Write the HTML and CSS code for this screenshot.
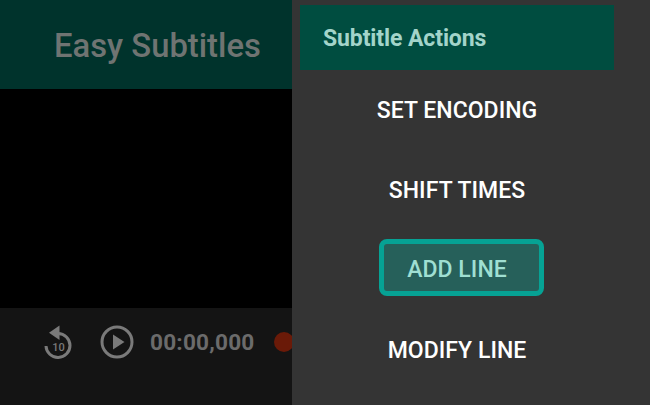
FILE: index.html
```html
<!DOCTYPE html>
<html lang="en">
<head>
<meta charset="utf-8">
<title>Easy Subtitles</title>
<link rel="stylesheet" href="styles.css">
</head>
<body>
<div class="app">
  <main class="main">
    <header class="appbar"><h1 class="app-title">Easy Subtitles</h1></header>
    <div class="video"></div>
    <div class="controls">
      <svg class="icon-replay" width="30" height="34" viewBox="0 0 30 34" aria-hidden="true">
        <path class="stroke" d="M15 8.5a12 12 0 1 1-12 12.5"/>
        <path class="fill" d="M16.5 0.5V15L6 7.8z"/>
        <text class="replay-num" x="15.5" y="25.5" text-anchor="middle">10</text>
      </svg>
      <svg class="icon-play" width="34" height="34" viewBox="0 0 34 34" aria-hidden="true">
        <circle class="stroke" cx="17" cy="17" r="15"/>
        <path class="fill" d="M13 9.5 24.5 17 13 24.5z"/>
      </svg>
      <span class="time">00:00,000</span>
      <span class="record"></span>
    </div>
  </main>
  <aside class="drawer">
    <div class="drawer-head">Subtitle Actions</div>
    <ul class="actions">
      <li class="action"><span class="action-label">SET ENCODING</span></li>
      <li class="action"><span class="action-label">SHIFT TIMES</span></li>
      <li class="action"><span class="action-label is-focused">ADD LINE</span></li>
      <li class="action"><span class="action-label">MODIFY LINE</span></li>
    </ul>
  </aside>
</div>
</body>
</html>
```
FILE: styles.css
```css
* { box-sizing: border-box; }
html, body { margin: 0; height: 100%; }
body { background: #343434; font-family: Roboto, "Liberation Sans", sans-serif; overflow: hidden; }
.app { display: flex; width: 650px; height: 405px; }
.main { width: 292px; flex: none; display: flex; flex-direction: column; overflow: hidden; background: #141414; }
.appbar { height: 89px; flex: none; background: #00332c; display: flex; align-items: center; padding: 2px 0 0 54px; }
.app-title { margin: 0; font-size: 32.8px; font-weight: 500; color: #6f7472; white-space: nowrap; }
.video { height: 219px; flex: none; background: #000; }
.controls { flex: none; height: 97px; display: flex; align-items: center; padding: 0 0 30px 43px; white-space: nowrap; }
.stroke { fill: none; stroke: #7a7a7a; stroke-width: 3; }
.fill { fill: #7a7a7a; }
.replay-num { fill: #7a7a7a; font-size: 11px; font-weight: 500; font-family: Roboto, sans-serif; }
.icon-replay { flex: none; margin-right: 27px; }
.icon-play { flex: none; margin-right: 16px; }
.time { font-size: 22.6px; font-weight: 700; color: #6b6b6b; letter-spacing: 0.2px; padding-top: 1px; }
.record { flex: none; width: 20px; height: 20px; border-radius: 50%; background: #6a1a08; margin-left: 20px; }
.drawer { width: 358px; flex: none; padding: 5px 0 0 8px; background: #343434; }
.drawer-head { width: 314px; height: 65px; background: #004d40; color: #a3d4ca; font-size: 23px; font-weight: 700; letter-spacing: -0.1px; display: flex; align-items: center; padding: 2px 0 0 23px; }
.actions { list-style: none; margin: 0; padding: 0; width: 314px; }
.action { height: 80px; display: flex; align-items: center; justify-content: center; }
.action-label { color: #fff; font-size: 23px; font-weight: 500; letter-spacing: 0.05px; white-space: nowrap; }
.is-focused { width: 165px; height: 57px; margin: -5px 0 0 8px; display: flex; align-items: center; justify-content: center; padding: 3px 8px 0 0; border: 5px solid #06a294; border-radius: 8px; background: #26605a; color: #9fdfd2; font-size: 23px; font-weight: 500; }
```
